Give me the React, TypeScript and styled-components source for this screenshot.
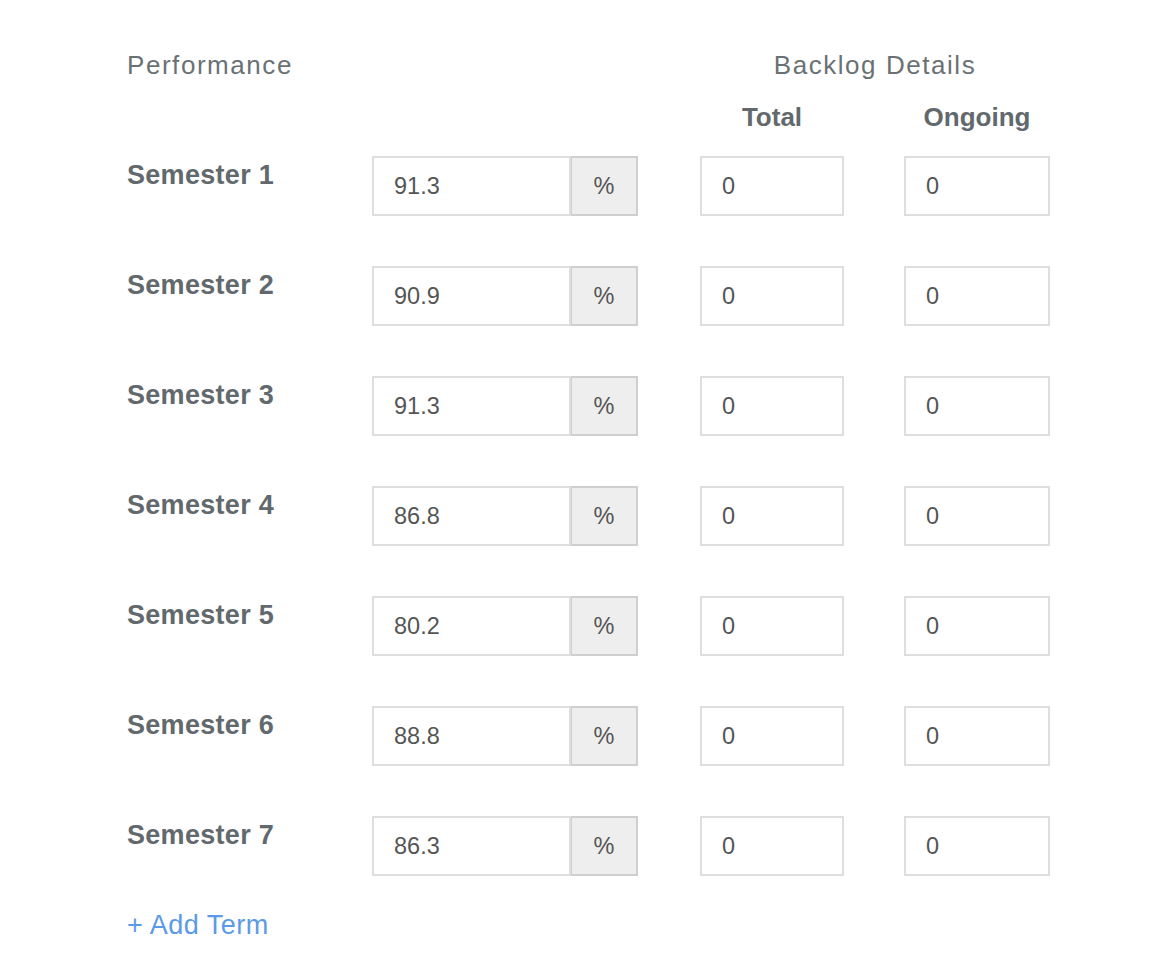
import React from "react";
import styled, { createGlobalStyle } from "styled-components";

const Global = createGlobalStyle`
  html, body { margin: 0; padding: 0; background: #fff; }
  body { font-family: "Liberation Sans", Arial, sans-serif; }
  * { box-sizing: border-box; }
`;

const Page = styled.div`
  width: 1170px;
  height: 976px;
  padding: 48px 0 0 127px;
  display: flex;
  flex-direction: column;
`;

const Grid = styled.div`
  display: grid;
  grid-template-columns: 245px 328px 204px 146px;
`;

const SectionTitle = styled.div`
  font-size: 26px;
  letter-spacing: 1.55px;
  color: #6a7175;
  line-height: 34px;
  height: 34px;
  white-space: nowrap;
`;

const BacklogTitle = styled(SectionTitle)`
  grid-column: 3 / span 2;
  text-align: center;
  padding-left: 0;
`;

const ColHead = styled.div<{ $w: number }>`
  font-size: 26px;
  font-weight: 700;
  color: #62696d;
  line-height: 34px;
  margin-top: 18px;
  width: ${(p) => p.$w}px;
  text-align: center;
`;

const Label = styled.div`
  font-size: 27px;
  font-weight: 700;
  letter-spacing: 0.3px;
  color: #62696d;
  line-height: 34px;
  padding-top: 2px;
  white-space: nowrap;
`;

const Cell = styled.div<{ $top: number }>`
  margin-top: ${(p) => p.$top}px;
  height: 60px;
`;

const Group = styled.div`
  display: flex;
  width: 266px;
  height: 60px;
`;

const Field = styled.div<{ $w: number }>`
  width: ${(p) => p.$w}px;
  height: 60px;
  border: 2px solid #dedede;
  background: #fff;
  display: flex;
  align-items: center;
  padding-left: 20px;
  font-size: 23.5px;
  color: #555;
`;

const Addon = styled.div`
  width: 67px;
  height: 60px;
  border: 2px solid #cfcfcf;
  border-left-width: 1px;
  background: #eeeeee;
  display: flex;
  align-items: center;
  justify-content: center;
  font-size: 23.5px;
  color: #555;
`;

const AddTerm = styled.div`
  margin-top: 32px;
  font-size: 27px;
  letter-spacing: 0.5px;
  color: #5b9ae6;
  line-height: 34px;
`;

const rows = ["91.3", "90.9", "91.3", "86.8", "80.2", "88.8", "86.3"];

export default function App() {
  return (
    <>
      <Global />
      <Page>
        <Grid>
          <SectionTitle>Performance</SectionTitle>
          <div />
          <BacklogTitle>Backlog Details</BacklogTitle>
          <div />
          <div />
          <ColHead $w={144}>Total</ColHead>
          <ColHead $w={146}>Ongoing</ColHead>
          {rows.map((v, i) => {
            const top = i === 0 ? 22 : 50;
            return (
              <React.Fragment key={i}>
                <Cell $top={top}>
                  <Label>Semester {i + 1}</Label>
                </Cell>
                <Cell $top={top}>
                  <Group>
                    <Field $w={199}>{v}</Field>
                    <Addon>%</Addon>
                  </Group>
                </Cell>
                <Cell $top={top}>
                  <Field $w={144}>0</Field>
                </Cell>
                <Cell $top={top}>
                  <Field $w={146}>0</Field>
                </Cell>
              </React.Fragment>
            );
          })}
        </Grid>
        <AddTerm>+ Add Term</AddTerm>
      </Page>
    </>
  );
}
